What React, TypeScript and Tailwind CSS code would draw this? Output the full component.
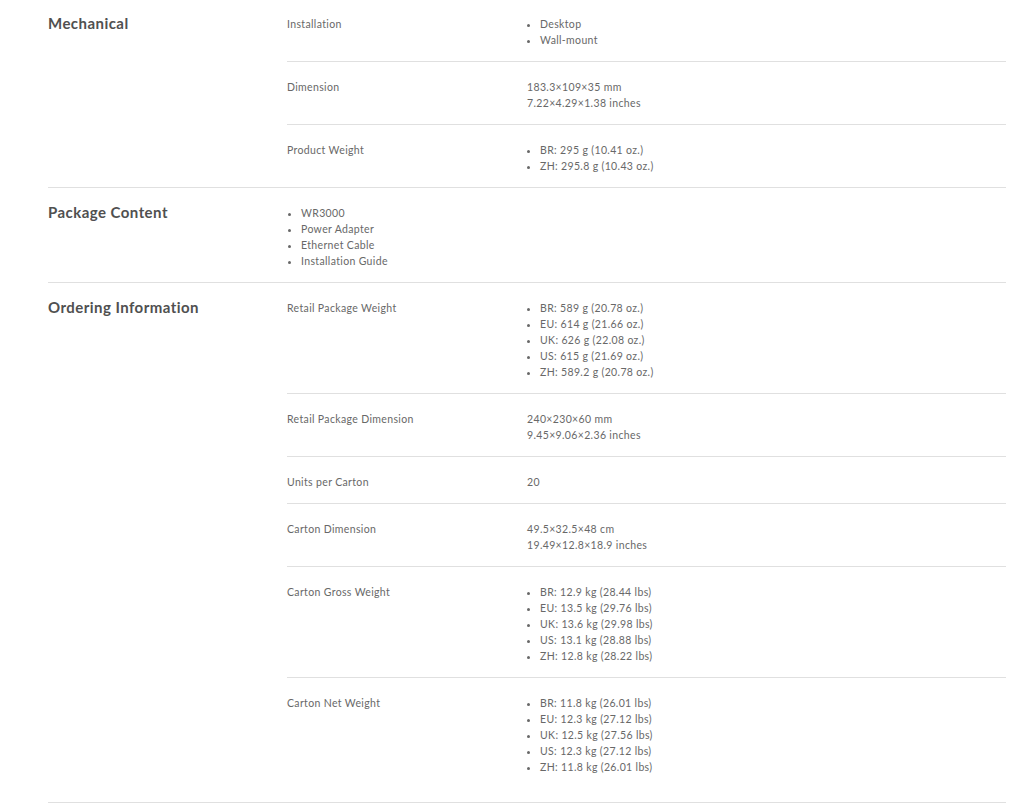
import React from "react";

type Row = { label: string; values: string[]; list: boolean };
type Section = { title: string; rows?: Row[]; list?: string[] };

const sections: Section[] = [
  {
    title: "Mechanical",
    rows: [
      { label: "Installation", values: ["Desktop", "Wall-mount"], list: true },
      { label: "Dimension", values: ["183.3×109×35 mm", "7.22×4.29×1.38 inches"], list: false },
      { label: "Product Weight", values: ["BR: 295 g (10.41 oz.)", "ZH: 295.8 g (10.43 oz.)"], list: true },
    ],
  },
  {
    title: "Package Content",
    list: ["WR3000", "Power Adapter", "Ethernet Cable", "Installation Guide"],
  },
  {
    title: "Ordering Information",
    rows: [
      {
        label: "Retail Package Weight",
        values: [
          "BR: 589 g (20.78 oz.)",
          "EU: 614 g (21.66 oz.)",
          "UK: 626 g (22.08 oz.)",
          "US: 615 g (21.69 oz.)",
          "ZH: 589.2 g (20.78 oz.)",
        ],
        list: true,
      },
      { label: "Retail Package Dimension", values: ["240×230×60 mm", "9.45×9.06×2.36 inches"], list: false },
      { label: "Units per Carton", values: ["20"], list: false },
      { label: "Carton Dimension", values: ["49.5×32.5×48 cm", "19.49×12.8×18.9 inches"], list: false },
      {
        label: "Carton Gross Weight",
        values: [
          "BR: 12.9 kg (28.44 lbs)",
          "EU: 13.5 kg (29.76 lbs)",
          "UK: 13.6 kg (29.98 lbs)",
          "US: 13.1 kg (28.88 lbs)",
          "ZH: 12.8 kg (28.22 lbs)",
        ],
        list: true,
      },
      {
        label: "Carton Net Weight",
        values: [
          "BR: 11.8 kg (26.01 lbs)",
          "EU: 12.3 kg (27.12 lbs)",
          "UK: 12.5 kg (27.56 lbs)",
          "US: 12.3 kg (27.12 lbs)",
          "ZH: 11.8 kg (26.01 lbs)",
        ],
        list: true,
      },
    ],
  },
];

function Values({ values, list }: { values: string[]; list: boolean }) {
  if (list) {
    return (
      <ul className="list-disc pl-[13px]">
        {values.map((v) => (
          <li key={v} className="leading-4">{v}</li>
        ))}
      </ul>
    );
  }
  return (
    <div>
      {values.map((v) => (
        <div key={v} className="leading-4">{v}</div>
      ))}
    </div>
  );
}

export default function App() {
  return (
    <div
      className="bg-white min-h-[809px] pl-[48px] pr-[10px] text-[#686868] text-[10.5px] tracking-[0.35px]"
      style={{ fontFamily: "Lato, 'Open Sans', sans-serif" }}
    >
      {sections.map((s, si) => (
        <div key={s.title} className={`flex ${si > 0 ? "border-t border-[#e0e0e0]" : ""}`}>
          <div className={`w-[239px] shrink-0 ${si === 0 ? "pt-[15px]" : "pt-[16px]"}`}>
            <h2 className="text-[15px] leading-4 font-bold text-[#505050] tracking-[0.45px]">{s.title}</h2>
          </div>
          <div className="flex-1">
            {s.list && (
              <div className="pt-[17px] pb-[13px]">
                <ul className="list-disc pl-[14px]">
                  {s.list.map((v) => (
                    <li key={v} className="leading-4">{v}</li>
                  ))}
                </ul>
              </div>
            )}
            {s.rows &&
              s.rows.map((r, ri) => (
                <div
                  key={r.label}
                  className={`flex ${ri > 0 ? "border-t border-[#e0e0e0]" : ""} ${
                    si === 0 && ri === 0 ? "pt-[16px]" : "pt-[17px]"
                  } ${si === sections.length - 1 && ri === s.rows!.length - 1 ? "pb-[27px]" : "pb-[13px]"}`}
                >
                  <div className="w-[240px] shrink-0 leading-4">{r.label}</div>
                  <div className="flex-1">
                    <Values values={r.values} list={r.list} />
                  </div>
                </div>
              ))}
          </div>
        </div>
      ))}
      <div className="border-t border-[#e0e0e0]" />
    </div>
  );
}
